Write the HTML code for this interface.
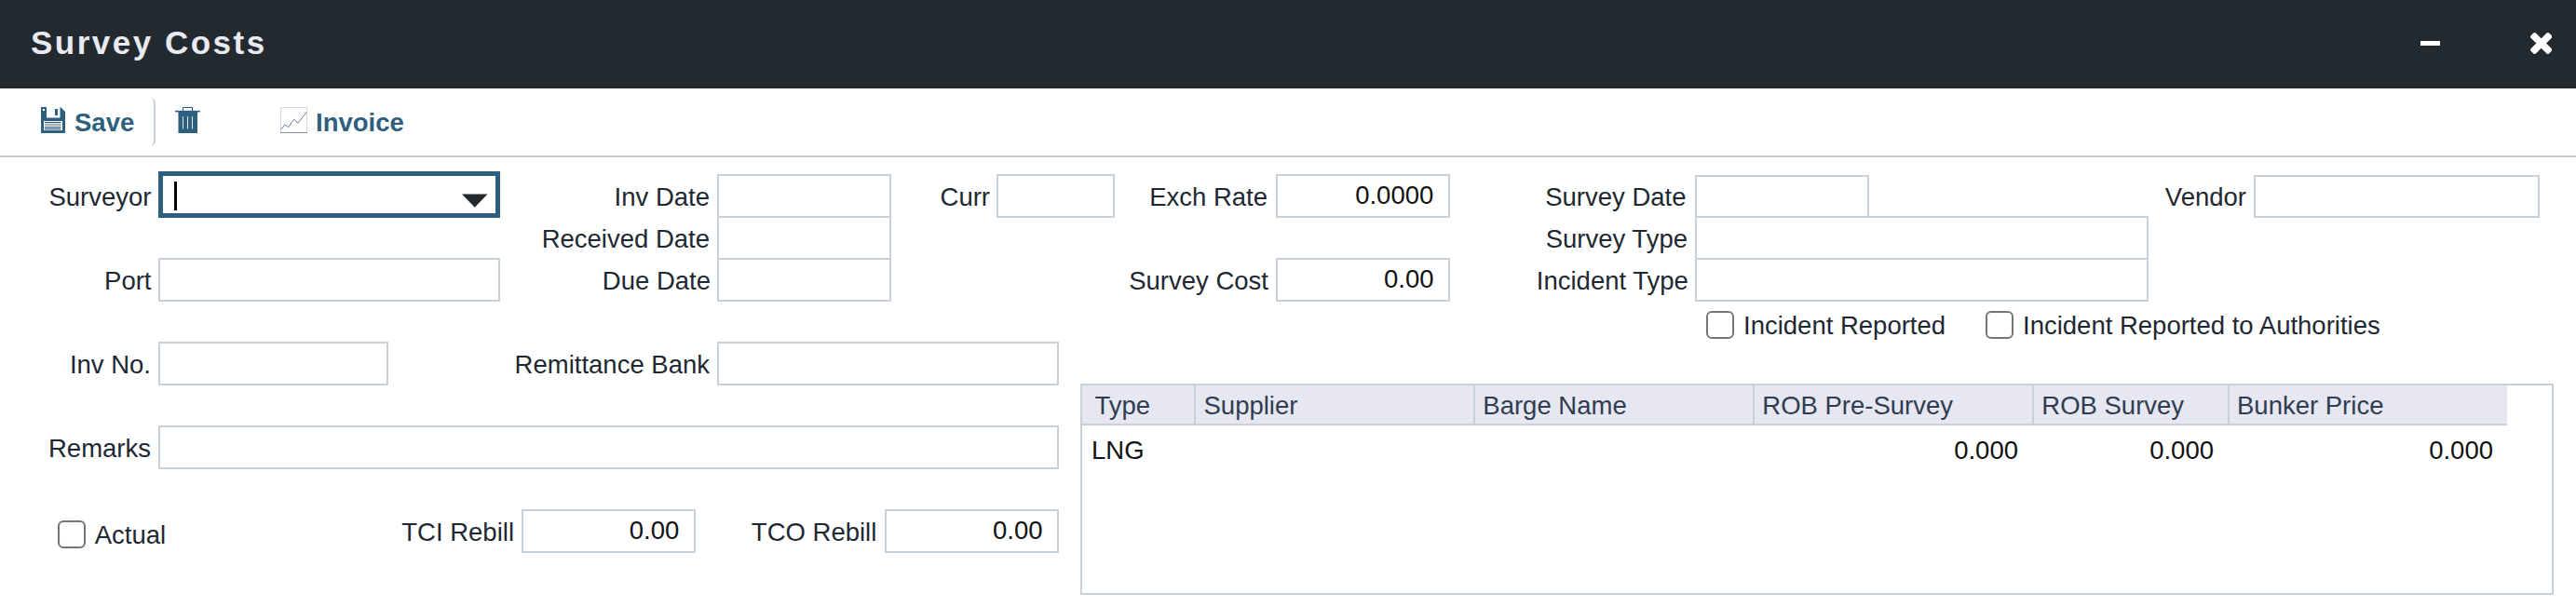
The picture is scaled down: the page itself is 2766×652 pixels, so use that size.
<!DOCTYPE html>
<html><head><meta charset="utf-8">
<style>
html,body{margin:0;padding:0;width:2766px;height:652px;overflow:hidden;background:#fff;font-family:"Liberation Sans",sans-serif;}
div,span{position:absolute;box-sizing:border-box;}
#hdr{left:0;top:0;width:2766px;height:95px;background:#22292f;}
#title{left:33px;top:26px;font-size:35px;line-height:40px;font-weight:bold;letter-spacing:2.5px;color:#e9e9f1;white-space:nowrap;}
#tb{left:0;top:95px;width:2766px;height:74px;border-bottom:2px solid #c3cbd6;}
.tbt{font-size:27.5px;line-height:32px;font-weight:bold;color:#2e5f7e;white-space:nowrap;}
.l{margin-top:1px;font-size:27.5px;line-height:32px;color:#1e2832;white-space:nowrap;text-align:right;}
.ll{margin-top:1px;font-size:27.5px;line-height:32px;color:#1e2832;white-space:nowrap;}
.b{border:2px solid #c8d0da;background:#fff;}
.v{margin-top:1px;font-size:27.5px;line-height:32px;color:#111;white-space:nowrap;text-align:right;}
.cb{width:30px;height:30px;border:2.5px solid #767676;border-radius:6px;background:#fff;}
.gh{margin-top:1px;font-size:27.5px;line-height:32px;color:#303c52;white-space:nowrap;}
.gs{width:2px;background:#c8d0da;top:414px;height:41px;}
</style></head><body>
<div id="hdr"></div>
<div id="title">Survey Costs</div>
<!-- window buttons -->
<div style="left:2599px;top:44px;width:21px;height:5px;background:#fff;"></div>
<svg style="position:absolute;left:2716.8px;top:35.2px" width="23.4" height="23" viewBox="110 -1170 1188 1188" preserveAspectRatio="none">
  <path transform="scale(1,-1)" fill="#fff" d="M1298 214q0 -40 -28 -68l-136 -136q-28 -28 -68 -28t-68 28l-294 294l-294 -294q-28 -28 -68 -28t-68 28l-136 136q-28 28 -28 68t28 68l294 294l-294 294q-28 28 -28 68t28 68l136 136q28 28 68 28t68 -28l294 -294l294 294q28 28 68 28t68 -28l136 -136q28 -28 28 -68t-28 -68l-294 -294l294 -294q28 -28 28 -68z"/>
</svg>

<!-- toolbar -->
<div id="tb"></div>
<svg style="position:absolute;left:44px;top:115px" width="26" height="28" viewBox="0 0 26 28">
  <path d="M0 0 H21 L26 5 V28 H0 Z" fill="#2e5f7e"/>
  <rect x="6" y="0" width="14.5" height="11.5" fill="#fff"/>
  <rect x="15" y="2" width="3" height="7" fill="#2e5f7e"/>
  <rect x="2" y="2" width="2" height="2" fill="#fff"/>
  <rect x="3" y="15" width="20" height="10" fill="#fff"/>
  <rect x="4" y="16" width="17.5" height="1.2" fill="#2e5f7e"/>
  <rect x="4" y="18.3" width="17.5" height="1.6" fill="#8a96a6"/>
  <rect x="4" y="21" width="17.5" height="1.2" fill="#2e5f7e"/>
  <rect x="4" y="23" width="17.5" height="1.2" fill="#2e5f7e"/>
</svg>
<div class="tbt" style="left:80px;top:116px;">Save</div>
<div style="left:150px;top:105px;width:17px;height:52px;border-right:2px solid #c8d0da;border-radius:0 6px 6px 0;"></div>
<svg style="position:absolute;left:188px;top:114px" width="28" height="30" viewBox="0 0 28 30">
  <rect x="8.5" y="1.5" width="10" height="4" fill="none" stroke="#2e5f7e" stroke-width="1"/>
  <rect x="0" y="4.8" width="27" height="1.6" fill="#2e5f7e"/>
  <rect x="3.5" y="6" width="20.5" height="23" fill="#2e5f7e"/>
  <rect x="8" y="11" width="1" height="13.5" fill="#dfe9e6"/>
  <rect x="13" y="11" width="1" height="13.5" fill="#dfe9e6"/>
  <rect x="18" y="11" width="1" height="13.5" fill="#dfe9e6"/>
</svg>
<svg style="position:absolute;left:301px;top:114px" width="30" height="30" viewBox="0 0 30 30">
  <rect x="0.5" y="1.5" width="28" height="27" fill="none" stroke="#d6d9e4" stroke-width="1"/>
  <path d="M0 28.5 H29" stroke="#8490a4" stroke-width="1"/>
  <path d="M0.8 25 L4.8 20 L8.8 22.6 L14.5 14.2 L19.1 18.1 L28.3 6.3" fill="none" stroke="#6a7b96" stroke-width="1"/>
</svg>
<div class="tbt" style="left:339px;top:116px;">Invoice</div>

<!-- row 1 -->
<div class="l" style="right:2603.5px;top:195px;">Surveyor</div>
<div style="left:170px;top:184px;width:367px;height:50px;border:5px solid #2e5f7e;background:#fff;"></div>
<div style="left:187px;top:195px;width:3px;height:31px;background:#000;"></div>
<svg style="position:absolute;left:496px;top:208px" width="28" height="16" viewBox="0 0 28 16">
  <path d="M0 0.5 H27.5 L13.75 14.8 Z" fill="#22292f"/>
</svg>

<div class="l" style="right:2004px;top:195px;">Inv Date</div>
<div class="b" style="left:770px;top:187px;width:187px;height:47px;"></div>
<div class="l" style="right:2004px;top:240px;">Received Date</div>
<div class="b" style="left:770px;top:232px;width:187px;height:47px;"></div>
<div class="l" style="right:2003px;top:285px;">Due Date</div>
<div class="b" style="left:770px;top:277px;width:187px;height:47px;"></div>

<div class="l" style="right:1703px;top:195px;">Curr</div>
<div class="b" style="left:1070px;top:187px;width:127px;height:47px;"></div>

<div class="l" style="right:1405px;top:195px;">Exch Rate</div>
<div class="b" style="left:1370px;top:187px;width:187px;height:47px;"></div>
<div class="v" style="right:1226.7px;top:193px;">0.0000</div>
<div class="l" style="right:1404px;top:285px;">Survey Cost</div>
<div class="b" style="left:1370px;top:277px;width:187px;height:47px;"></div>
<div class="v" style="right:1226.5px;top:283px;">0.00</div>

<div class="l" style="right:955.5px;top:195px;">Survey Date</div>
<div class="b" style="left:1820px;top:188px;width:187px;height:46px;"></div>
<div class="l" style="right:954px;top:240px;">Survey Type</div>
<div class="b" style="left:1820px;top:232px;width:487px;height:47px;"></div>
<div class="l" style="right:953.1px;top:285px;">Incident Type</div>
<div class="b" style="left:1820px;top:277px;width:487px;height:47px;"></div>

<div class="l" style="right:354px;top:195px;">Vendor</div>
<div class="b" style="left:2420px;top:188px;width:307px;height:46px;"></div>

<div class="l" style="right:2603.5px;top:285px;">Port</div>
<div class="b" style="left:170px;top:277px;width:367px;height:47px;"></div>

<div class="cb" style="left:1832px;top:334px;"></div>
<div class="ll" style="left:1872px;top:333px;">Incident Reported</div>
<div class="cb" style="left:2132px;top:334px;"></div>
<div class="ll" style="left:2172px;top:333px;">Incident Reported to Authorities</div>

<!-- inv no row -->
<div class="l" style="right:2604px;top:375px;">Inv No.</div>
<div class="b" style="left:170px;top:367px;width:247px;height:47px;"></div>
<div class="l" style="right:2004px;top:375px;">Remittance Bank</div>
<div class="b" style="left:770px;top:367px;width:367px;height:47px;"></div>

<div class="l" style="right:2604px;top:465px;">Remarks</div>
<div class="b" style="left:170px;top:457px;width:967px;height:47px;"></div>

<div class="cb" style="left:62px;top:559px;"></div>
<div class="ll" style="left:101.7px;top:558px;">Actual</div>
<div class="l" style="right:2214px;top:555px;">TCI Rebill</div>
<div class="b" style="left:560px;top:547px;width:187px;height:47px;"></div>
<div class="v" style="right:2036.7px;top:553px;">0.00</div>
<div class="l" style="right:1824.7px;top:555px;">TCO Rebill</div>
<div class="b" style="left:950px;top:547px;width:187px;height:47px;"></div>
<div class="v" style="right:1646.4px;top:553px;">0.00</div>

<!-- grid -->
<div class="b" style="left:1160px;top:412px;width:1582px;height:227px;"></div>
<div style="left:1162px;top:414px;width:1530px;height:41px;background:#e6e7f0;"></div>
<div style="left:1162px;top:455px;width:1530px;height:2px;background:#c8d0da;"></div>
<div class="gs" style="left:1282px;"></div>
<div class="gs" style="left:1582px;"></div>
<div class="gs" style="left:1882px;"></div>
<div class="gs" style="left:2182px;"></div>
<div class="gs" style="left:2392px;"></div>
<div class="gh" style="left:1175.4px;top:419px;">Type</div>
<div class="gh" style="left:1292.5px;top:419px;">Supplier</div>
<div class="gh" style="left:1592.3px;top:419px;">Barge Name</div>
<div class="gh" style="left:1892.3px;top:419px;">ROB Pre-Survey</div>
<div class="gh" style="left:2192.3px;top:419px;">ROB Survey</div>
<div class="gh" style="left:2402px;top:419px;">Bunker Price</div>
<div class="ll" style="left:1172px;top:467px;color:#111;">LNG</div>
<div class="v" style="right:599px;top:467px;">0.000</div>
<div class="v" style="right:389px;top:467px;">0.000</div>
<div class="v" style="right:89px;top:467px;">0.000</div>
</body></html>
